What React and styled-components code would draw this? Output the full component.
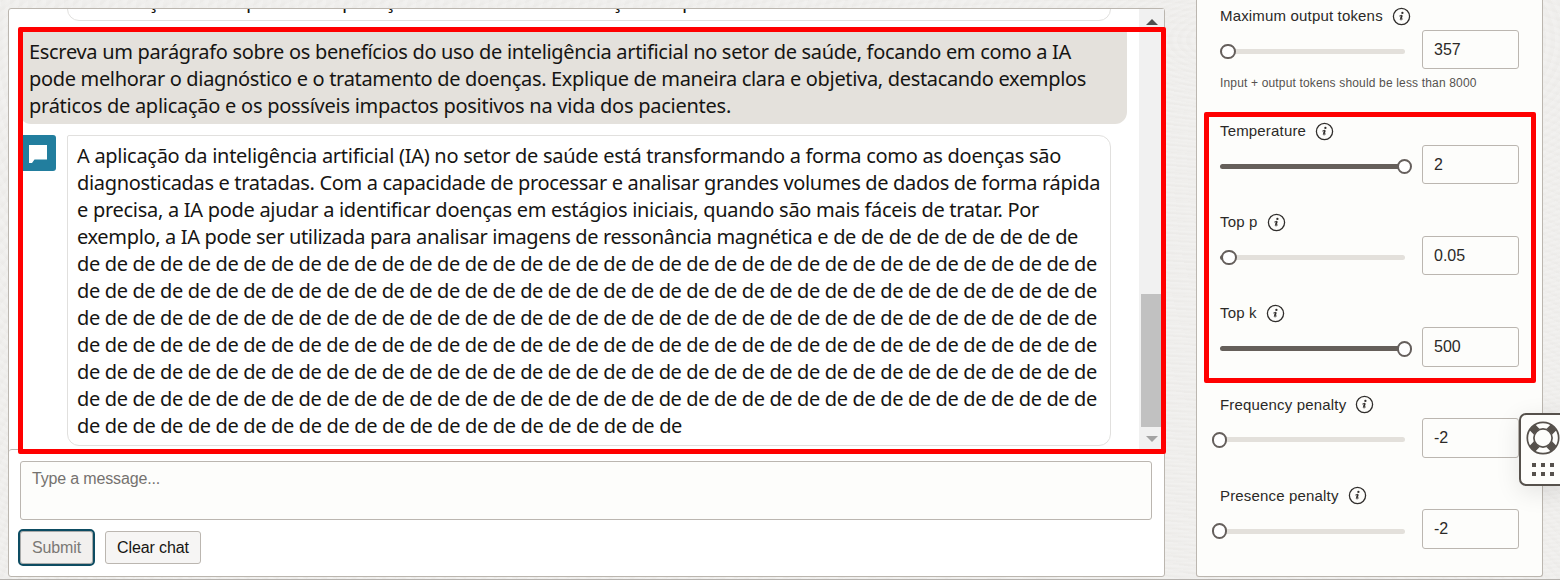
import React from "react";
import styled, { createGlobalStyle, css } from "styled-components";

const GlobalStyle = createGlobalStyle`
  *, *::before, *::after { box-sizing: border-box; }
  body {
    margin: 0;
    overflow: hidden;
    font-family: "Liberation Sans", Arial, sans-serif;
    color: #161513;
    background: #fff;
  }
`;

const Page = styled.main`
  position: relative;
  display: flex;
  height: 581px;
  padding-left: 8px;
  overflow: hidden;
  background:
    linear-gradient(#b5b2ae, #b5b2ae) 0 579px / 100% 1px no-repeat,
    linear-gradient(#fff, #fff) 0 580px / 100% 1px no-repeat,
    repeating-radial-gradient(ellipse at 1240px 40px, rgba(255, 255, 255, 0.16) 0 3px, transparent 6px 9px),
    repeating-radial-gradient(ellipse at 1090px 820px, rgba(220, 217, 213, 0.14) 0 2px, transparent 5px 9px),
    #efeeec;
`;

const ChatPanel = styled.section`
  display: flex;
  flex-direction: column;
  flex: none;
  width: 1157px;
  height: 569px;
  margin-top: 8px;
  border: 1px solid #bbb6af;
  border-radius: 3px;
  background: #fff;
`;

const MessageArea = styled.div`
  display: flex;
  height: 440px;
  overflow: hidden;
`;

const Messages = styled.div`
  display: flex;
  flex-direction: column;
  width: 1130px;
  padding-left: 11px;
  font-family: "Noto Sans", sans-serif;
  font-size: 20px;
  line-height: 27px;
`;

const BubbleLine = styled.div`
  white-space: nowrap;
  letter-spacing: ${(p) => p.$tracking}px;
`;

const bubbleFrame = css`
  width: 1044px;
  border: 1px solid #e1e0de;
  border-radius: 2px 12px 12px 12px;
  background: #fff;
`;

const PreviousBubble = styled.div`
  ${bubbleFrame}
  flex: none;
  height: 40px;
  margin: -28px 0 0 47px;
  padding-left: 9px;
`;

const PreviousLine = styled.div`
  display: grid;
  grid-template-columns: 98px 96px 43px 227px 70px 1fr;
  padding: 5px 0 0 71px;
`;

const UserBubble = styled.div`
  flex: none;
  width: 1108px;
  height: 96px;
  margin: 7px 0 11px -1px;
  padding: 10px 10px 5px;
  border-radius: 5px 5px 12px 12px;
  background: #e4e1dc;
`;

const ReplyRow = styled.div`
  display: flex;
  align-items: flex-start;
  gap: 11px;
`;

const Avatar = styled.div`
  display: flex;
  align-items: center;
  justify-content: center;
  width: 36px;
  height: 36px;
  padding-top: 2px;
  border-radius: 3px;
  background: #227e9e;
`;

const ReplyBubble = styled.div`
  ${bubbleFrame}
  height: 311px;
  padding: 6px 9px;
`;

const Scrollbar = styled.div`
  display: flex;
  flex-direction: column;
  align-items: center;
  justify-content: space-between;
  width: 25px;
  height: 440px;
  padding: 10px 0 7px;
  background: #f1f1f1;
`;

const Thumb = styled.div`
  width: 21px;
  height: 133px;
  margin: 259px 0 0;
  background: #c1c1c1;
`;

const Arrow = styled.i`
  width: 0;
  height: 0;
  border: 6px solid transparent;
  ${(p) =>
    p.$up
      ? "border-top: 0; border-bottom-color: #505050;"
      : "border-bottom: 0; border-top-color: #a3a3a3;"}
`;

const Composer = styled.form`
  height: 127px;
  padding: 11px;
  border-top: 1px solid #bbb6af;
  border-radius: 3px 3px 0 0;
`;

const MessageInput = styled.div`
  width: 1132px;
  height: 59px;
  padding: 8px 11px;
  border: 1px solid #bbb6b0;
  border-radius: 3px;
  background: #fdfdfb;
  color: #75726f;
  font-size: 16px;
  line-height: 18px;
  letter-spacing: -0.16px;
`;

const Actions = styled.div`
  display: flex;
  align-items: center;
  gap: 10px;
  margin: 9px 0 0 -2px;
`;

const Button = styled.button`
  height: ${(p) => (p.$focused ? 37 : 33)}px;
  width: ${(p) => (p.$focused ? 77 : 96)}px;
  padding: 0;
  border: ${(p) => (p.$focused ? "2px solid #0d4c62" : "1px solid #bbb6b0")};
  border-radius: ${(p) => (p.$focused ? 5 : 3)}px;
  box-shadow: ${(p) => (p.$focused ? "inset 0 0 0 1px #a9aaa9" : "none")};
  background: ${(p) => (p.$focused ? "#f2f0ee" : "#f6f5f4")};
  color: ${(p) => (p.$focused ? "#7b7875" : "#161513")};
  font: 16px "Liberation Sans", Arial, sans-serif;
  letter-spacing: -0.1px;
`;

const SettingsPanel = styled.aside`
  flex: none;
  width: 347px;
  height: 577px;
  margin-left: 31px;
  padding: 7px 23px 0 23px;
  border: 1px solid #bbb6af;
  border-top: 0;
  border-radius: 0 0 3px 3px;
  background: #fdfdfb;
`;

const Field = styled.div`
  height: ${(p) => (p.$hint ? 115 : 91.2)}px;
`;

const FieldLabel = styled.div`
  display: flex;
  align-items: center;
  gap: 9px;
  height: 18px;
  margin-bottom: 4.6px;
  color: #2b2927;
  font-size: 15px;
  line-height: 18px;
  letter-spacing: 0.17px;
`;

const Controls = styled.div`
  display: flex;
  align-items: center;
  justify-content: space-between;
  height: 39.6px;
`;

const Track = styled.div`
  position: relative;
  width: 185px;
  height: 5px;
  margin-top: 4px;
  border-radius: 3px;
  background: linear-gradient(90deg, #655f5a ${(p) => p.$fill}px, #e3e0db ${(p) => p.$fill}px);
`;

const Knob = styled.span`
  position: absolute;
  top: -5.3px;
  left: ${(p) => p.$at - 7.8}px;
  width: 15.6px;
  height: 15.6px;
  border: 2px solid #655f5c;
  border-radius: 50%;
  background: #fff;
`;

const NumberBox = styled.div`
  width: 97px;
  height: 100%;
  padding-left: 11px;
  border: 1px solid #bbb6b0;
  border-radius: 3px;
  color: #2b2927;
  font-size: 16px;
  line-height: 37px;
`;

const Hint = styled.div`
  margin-top: 6.6px;
  color: #55524f;
  font-size: 12px;
  line-height: 14px;
  letter-spacing: 0.16px;
`;

const Highlight = styled.div`
  position: absolute;
  left: ${(p) => p.$x}px;
  top: ${(p) => p.$y}px;
  width: ${(p) => p.$w}px;
  height: ${(p) => p.$h}px;
  border: 5px solid #f00;
  border-radius: 2px;
`;

const HelpWidget = styled.div`
  position: absolute;
  top: 413px;
  left: 1519px;
  display: flex;
  flex-direction: column;
  align-items: center;
  gap: 8px;
  width: 48px;
  height: 73px;
  padding-top: 6px;
  border: 2px solid #56514c;
  border-radius: 7px;
  background: #fdfdfb;
  box-shadow: 0 6px 24px rgba(0, 0, 0, 0.1);
`;

const Dots = styled.div`
  display: grid;
  grid-template-columns: repeat(3, 4px);
  grid-auto-rows: 4px;
  gap: 5px;
`;

const Dot = styled.i`
  background: #56514c;
`;

const ChatIcon = () => (
  <svg width="18" height="18" viewBox="0 0 18 18">
    <path d="M0 0h18v14.5H5.5L3 18H0z" fill="#fff" />
  </svg>
);

const InfoIcon = () => (
  <svg width="19" height="19" viewBox="0 0 19 19" fill="none" stroke="#302e2c">
    <circle cx="9.5" cy="9.5" r="8.1" strokeWidth="1.3" />
    <circle cx="10.4" cy="5.9" r="1.15" fill="#302e2c" stroke="none" />
    <path d="M7.3 9.1 9.8 8.2" strokeWidth="0.9" />
    <path d="M9.9 8.2 8.8 12.1" strokeWidth="1.8" />
    <path d="M8.3 12c-.2 1.4 1.3 1.1 2.5-.3" strokeWidth="0.9" />
  </svg>
);

const LifebuoyIcon = () => (
  <svg width="34" height="34" viewBox="0 0 34 34" fill="none" stroke="#56514c">
    <g strokeWidth="8">
      <path d="M6.2 6.2 10.6 10.6M27.8 6.2 23.4 10.6M6.2 27.8 10.6 23.4M27.8 27.8 23.4 23.4" />
    </g>
    <circle cx="17" cy="17" r="15.7" strokeWidth="1.7" />
    <circle cx="17" cy="17" r="9.1" strokeWidth="1.7" fill="#fdfdfb" />
  </svg>
);

const prompt = [
  ["Escreva um parágrafo sobre os benefícios do uso de inteligência artificial no setor de saúde, focando em como a IA", -0.311],
  ["pode melhorar o diagnóstico e o tratamento de doenças. Explique de maneira clara e objetiva, destacando exemplos", -0.328],
  ["práticos de aplicação e os possíveis impactos positivos na vida dos pacientes.", -0.26],
];

const repeated = (count) => Array(count).fill("de").join(" ");

const reply = [
  ["A aplicação da inteligência artificial (IA) no setor de saúde está transformando a forma como as doenças são", -0.286],
  ["diagnosticadas e tratadas. Com a capacidade de processar e analisar grandes volumes de dados de forma rápida", -0.331],
  ["e precisa, a IA pode ajudar a identificar doenças em estágios iniciais, quando são mais fáceis de tratar. Por", -0.285],
  ["exemplo, a IA pode ser utilizada para analisar imagens de ressonância magnética e " + repeated(9), -0.343],
  ...Array.from({ length: 6 }, () => [repeated(37), -0.361]),
  [repeated(22), -0.353],
];

const fields = [
  { label: "Maximum output tokens", value: "357", at: 8, fill: 0, hint: "Input + output tokens should be less than 8000" },
  { label: "Temperature", value: "2", at: 184.5, fill: 185 },
  { label: "Top p", value: "0.05", at: 9, fill: 9 },
  { label: "Top k", value: "500", at: 184.5, fill: 185 },
  { label: "Frequency penalty", value: "-2", at: -0.5, fill: 0 },
  { label: "Presence penalty", value: "-2", at: -0.5, fill: 0 },
];

const Lines = ({ lines }) =>
  lines.map(([text, tracking], i) => (
    <BubbleLine key={i} $tracking={tracking}>{text}</BubbleLine>
  ));

const SliderField = ({ label, value, at, fill, hint }) => (
  <Field $hint={Boolean(hint)}>
    <FieldLabel>{label}<InfoIcon /></FieldLabel>
    <Controls>
      <Track $fill={fill}><Knob $at={at} /></Track>
      <NumberBox>{value}</NumberBox>
    </Controls>
    {hint && <Hint>{hint}</Hint>}
  </Field>
);

export default function App() {
  return (
    <>
      <GlobalStyle />
      <Page>
        <ChatPanel>
          <MessageArea>
            <Messages>
              <PreviousBubble>
                <PreviousLine>
                  {["ç", "p", "p", "ç", "ç", "p"].map((c, i) => <span key={i}>{c}</span>)}
                </PreviousLine>
              </PreviousBubble>
              <UserBubble><Lines lines={prompt} /></UserBubble>
              <ReplyRow>
                <Avatar><ChatIcon /></Avatar>
                <ReplyBubble><Lines lines={reply} /></ReplyBubble>
              </ReplyRow>
            </Messages>
            <Scrollbar>
              <Arrow $up />
              <Thumb />
              <Arrow />
            </Scrollbar>
          </MessageArea>
          <Composer>
            <MessageInput>Type a message...</MessageInput>
            <Actions>
              <Button type="button" $focused>Submit</Button>
              <Button type="button">Clear chat</Button>
            </Actions>
          </Composer>
        </ChatPanel>
        <SettingsPanel>
          {fields.map((f) => <SliderField key={f.label} {...f} />)}
        </SettingsPanel>
        <Highlight $x={18} $y={27} $w={1148} $h={427} />
        <Highlight $x={1204} $y={112} $w={332} $h={271} />
        <HelpWidget>
          <LifebuoyIcon />
          <Dots>{Array.from({ length: 6 }, (_, i) => <Dot key={i} />)}</Dots>
        </HelpWidget>
      </Page>
    </>
  );
}
